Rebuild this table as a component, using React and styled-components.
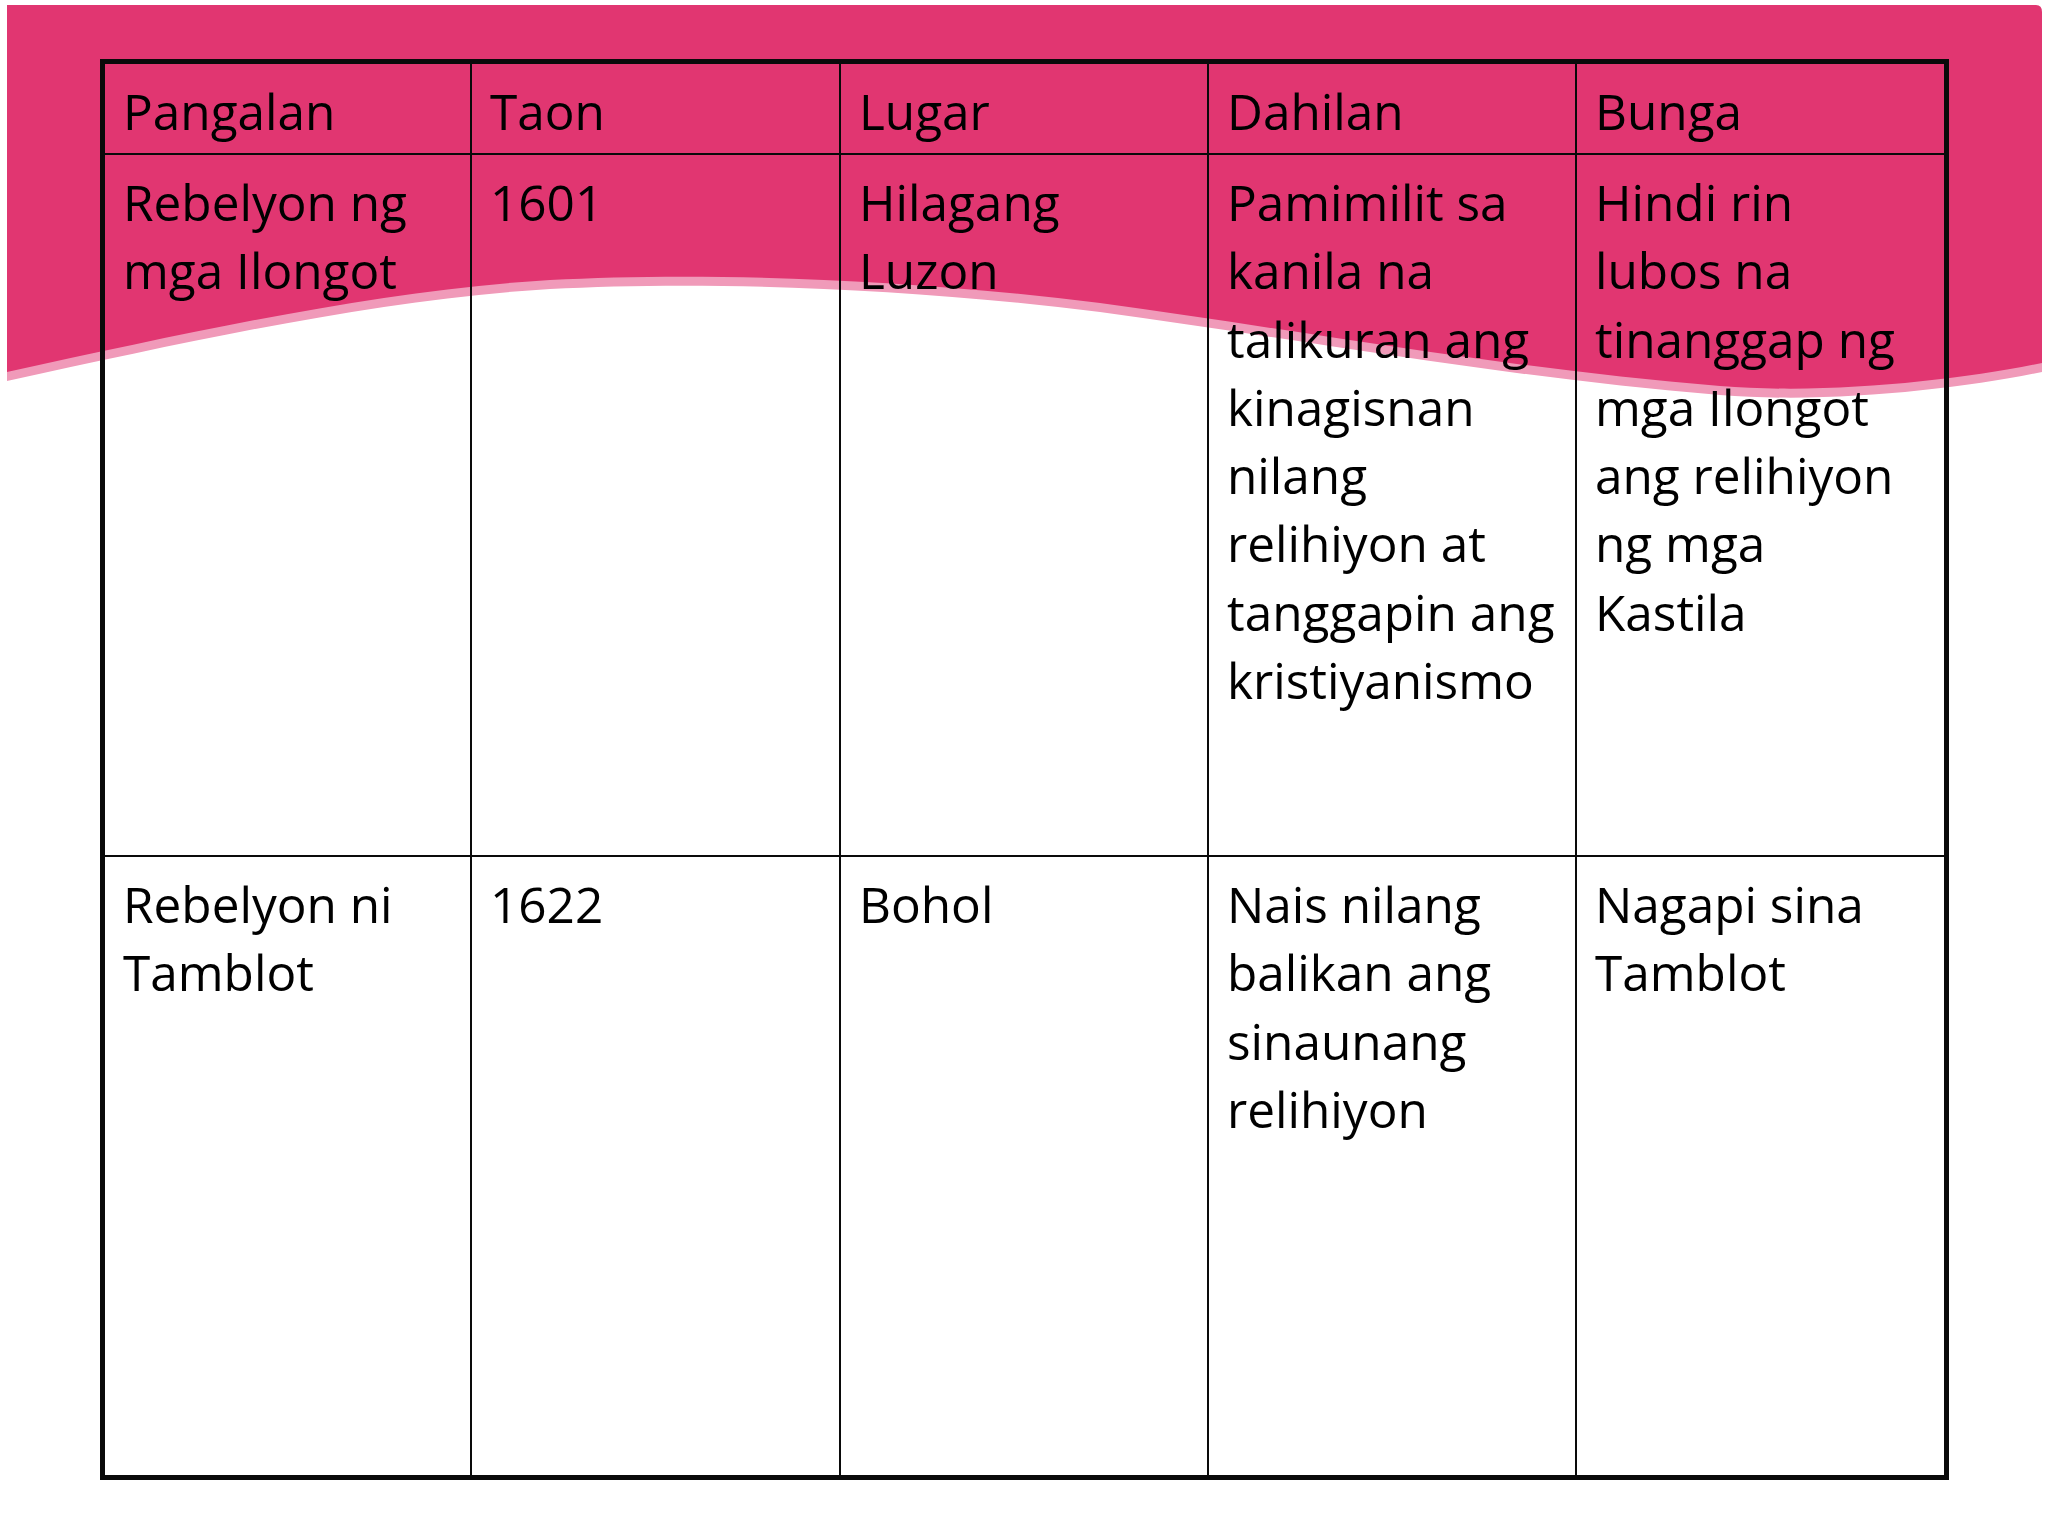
import React from 'react'
import styled, {createGlobalStyle} from 'styled-components'

const GlobalStyle = createGlobalStyle`
  html, body {
    margin: 0;
    padding: 0;
    background: #fff;
  }
`

const header = ['Pangalan', 'Taon', 'Lugar', 'Dahilan', 'Bunga']

const rows = [
  [
    ['Rebelyon ng', 'mga Ilongot'],
    ['1601'],
    ['Hilagang', 'Luzon'],
    ['Pamimilit sa', 'kanila na', 'talikuran ang', 'kinagisnan', 'nilang', 'relihiyon at', 'tanggapin ang', 'kristiyanismo'],
    ['Hindi rin', 'lubos na', 'tinanggap ng', 'mga Ilongot', 'ang relihiyon', 'ng mga', 'Kastila'],
  ],
  [
    ['Rebelyon ni', 'Tamblot'],
    ['1622'],
    ['Bohol'],
    ['Nais nilang', 'balikan ang', 'sinaunang', 'relihiyon'],
    ['Nagapi sina', 'Tamblot'],
  ],
]

const Lines = ({lines}) => lines.map((l, i) => (
  <React.Fragment key={i}>
    {l}
    {i < lines.length - 1 && <br/>}
  </React.Fragment>
))

const App = () => {
  return (
    <Slide>
      <GlobalStyle/>
      <Backdrop viewBox="0 0 2048 1536" preserveAspectRatio="none">
        <path
          d="M7 14 H2042 V372 C1960 389 1830 404 1720 395 C1500 377 1300 339 1100 312 C900 287 700 281 550 289 C380 299 200 339 7 381 Z"
          fill="#f09ab9"
        />
        <path
          d="M7 5 H2036 Q2042 5 2042 12 V363 C1960 380 1830 395 1720 386 C1500 368 1300 330 1100 303 C900 278 700 272 550 280 C380 290 200 330 7 372 Z"
          fill="#e13671"
        />
      </Backdrop>
      <Content>
        <Grid>
          {header.map((h, c) => (
            <Cell key={h} $lastCol={c === 4}>{h}</Cell>
          ))}
          {rows.map((row, r) => row.map((cell, c) => (
            <Cell key={`${r}-${c}`} $lastCol={c === 4} $lastRow={r === rows.length - 1}>
              <Lines lines={cell}/>
            </Cell>
          )))}
        </Grid>
      </Content>
    </Slide>
  )
}

export default App

const Slide = styled.div`
  position: relative;
  width: 2048px;
  height: 1536px;
  background: #fff;
  overflow: hidden;
`

const Backdrop = styled.svg`
  position: absolute;
  inset: 0;
  width: 2048px;
  height: 1536px;
`

const Content = styled.div`
  position: relative;
  padding: 59px 0 0 100px;
`

const Grid = styled.div`
  box-sizing: border-box;
  display: grid;
  grid-template-columns: 367px 369px 368px 368px 367px;
  grid-template-rows: 91px 702px 618px;
  width: 1849px;
  border: 5px solid #0a0a0a;
`

const Cell = styled.div`
  box-sizing: border-box;
  padding: 13px 6px 0 18px;
  border-right: ${p => (p.$lastCol ? 'none' : '2px solid #0a0a0a')};
  border-bottom: ${p => (p.$lastRow ? 'none' : '2px solid #0a0a0a')};
  font-family: "Open Sans", "Noto Sans", sans-serif;
  font-size: 49.5px;
  line-height: 68.3px;
  color: #000;
  white-space: nowrap;
`
